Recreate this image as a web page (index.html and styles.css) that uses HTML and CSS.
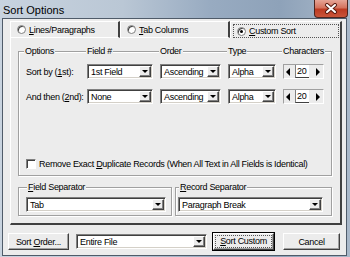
FILE: index.html
```html
<!DOCTYPE html>
<html lang="en">
<head>
    <meta charset="UTF-8">
    <title>Sort Options</title>
    <link rel="stylesheet" href="styles.css">
</head>
<body>
    <div class="window">
        <div class="titlebar">
            <span class="title">Sort Options</span>
            <div class="close">
                <svg width="14" height="11" viewBox="0 0 14 11">
                    <path d="M3 2 L11 9 M11 2 L3 9" stroke="#5a1d12" stroke-width="4" stroke-linecap="round"/>
                    <path d="M3 2 L11 9 M11 2 L3 9" stroke="#fff" stroke-width="2" stroke-linecap="round"/>
                </svg>
            </div>
        </div>

        <div class="client">
            <!-- mode tabs -->
            <div class="tabs">
                <div class="tab"><span class="radio"></span><span><u>L</u>ines/Paragraphs</span></div>
                <div class="tab"><span class="radio"></span><span><u>T</u>ab Columns</span></div>
                <div class="tab active"><div class="focus"><span class="radio on"></span><span><u>C</u>ustom Sort</span></div></div>
            </div>

            <div class="panel">
                <div class="group options">
                    <div class="grid">
                        <span class="head">Options</span>
                        <span class="head">Field #</span>
                        <span class="head">Order</span>
                        <span class="head">Type</span>
                        <span class="head">Characters</span>

                        <span class="lbl">Sort by (<u>1</u>st):</span>
                        <div class="combo w-field"><span>1st Field</span><i class="drop"></i></div>
                        <div class="combo w-order"><span>Ascending</span><i class="drop"></i></div>
                        <div class="combo w-type"><span>Alpha</span><i class="drop"></i></div>
                        <div class="spin"><i class="arr left"></i><span class="num">20</span><i class="arr right"></i></div>

                        <span class="lbl">And then (<u>2</u>nd):</span>
                        <div class="combo w-field"><span>None</span><i class="drop"></i></div>
                        <div class="combo w-order"><span>Ascending</span><i class="drop"></i></div>
                        <div class="combo w-type"><span>Alpha</span><i class="drop"></i></div>
                        <div class="spin"><i class="arr left"></i><span class="num">20</span><i class="arr right"></i></div>
                    </div>
                    <div class="check"><span class="box"></span><span>Remove Exact <u>D</u>uplicate Records (When All Text in All Fields is Identical)</span></div>
                </div>

                <div class="seps">
                    <div class="group sep field-sep">
                        <span class="head"><u>F</u>ield Separator</span>
                        <div class="combo w-fsep"><span>Tab</span><i class="drop"></i></div>
                    </div>
                    <div class="group sep rec-sep">
                        <span class="head"><u>R</u>ecord Separator</span>
                        <div class="combo w-rsep"><span>Paragraph Break</span><i class="drop"></i></div>
                    </div>
                </div>
            </div>

            <div class="footer">
                <div class="btn w-order-btn"><span>Sort <u>O</u>rder...</span></div>
                <div class="combo w-scope"><span>Entire File</span><i class="drop"></i></div>
                <div class="btn default w-sort"><span class="dots"><u>S</u>ort Custom</span></div>
                <div class="btn w-cancel"><span>Cancel</span></div>
            </div>
        </div>
    </div>
</body>
</html>
```

FILE: styles.css
```css
* { box-sizing: border-box; }
body { margin: 0; width: 350px; height: 257px; overflow: hidden; background: #7b8ea6; font-family: "Liberation Sans", Arial, sans-serif; font-size: 9px; letter-spacing: -0.3px; color: #000; }
u { text-decoration: underline; text-underline-offset: 1px; }

.window { height: 257px; display: flex; flex-direction: column; padding: 0 3px 4px 2px; background: linear-gradient(to right, #c8d3df 0%, #bac7d5 35%, #98abc1 60%, #8ea2b9 80%, #a9b8c9 100%); }
.titlebar { height: 20px; display: flex; justify-content: space-between; align-items: flex-start; }
.title { font-size: 11px; letter-spacing: 0; padding: 4px 0 0 1px; color: #000; }
.close { width: 34px; height: 18px; margin-right: -1px; display: flex; align-items: center; justify-content: center; border: 1px solid #4d2520; border-top: none; border-radius: 0 0 4px 4px; background: linear-gradient(#e6a596 0%, #d5735e 45%, #bd3b22 55%, #c9553a 100%); }

.client { flex: 1; display: flex; flex-direction: column; background: #ececec; border: 1px solid #4f5b69; padding: 2px 4px 0 7px; }

/* tabs */
.tabs { display: flex; height: 17px; }
.tab { width: 110px; display: flex; align-items: center; gap: 3px; padding-left: 6px; border-top: 1px solid #fff; border-left: 1px solid #fff; border-right: 2px solid #404040; border-bottom: 1px solid #fff; }
.tab.active { width: 112px; border-bottom: none; padding: 2px 1px 0 2px; }
.focus { flex: 1; height: 100%; display: flex; align-items: center; gap: 3px; padding-left: 3px; border: 1px dotted #555; }
.radio { width: 9px; height: 9px; border-radius: 50%; background: #fff; border: 1px solid #808080; box-shadow: inset 1px 1px #404040; position: relative; }
.radio.on::after { content: ""; position: absolute; left: 2px; top: 2px; width: 3px; height: 3px; border-radius: 50%; background: #000; }

/* tab page */
.panel { height: 187px; border-left: 1px solid #fff; border-right: 2px solid #404040; border-bottom: 2px solid #404040; padding: 13px 8px 0 7px; }
.group { border: 1px solid #a0a0a0; box-shadow: inset 1px 1px #fff, 1px 1px #fff; }
.head { background: #ececec; padding: 0 1px; margin-left: -1px; line-height: 12px; }

.options { height: 125px; display: flex; flex-direction: column; padding: 0 0 6px 6px; }
.grid { display: grid; grid-template-columns: 62px 73px 68px 55px 41px; row-gap: 10px; align-items: center; margin-top: -7px; }
.grid .head { justify-self: start; margin-bottom: -3px; }
.lbl { padding-left: 1px; white-space: nowrap; }

.combo { height: 15px; display: flex; align-items: center; justify-content: space-between; background: #fff; border: 1px solid; border-color: #808080 #fff #fff #808080; box-shadow: inset 1px 1px #404040, inset -1px -1px #d4d0c8; padding: 0 1px 0 3px; white-space: nowrap; }
.drop { width: 12px; height: 11px; display: flex; align-items: center; justify-content: center; background: #ececec; border: 1px solid; border-color: #fff #404040 #404040 #fff; box-shadow: inset -1px -1px #808080; }
.drop::after { content: ""; border-left: 3px solid transparent; border-right: 3px solid transparent; border-top: 3px solid #000; }
.w-field { width: 66px; }
.w-order { width: 61px; }
.w-type { width: 48px; }

.spin { width: 41px; height: 15px; display: flex; align-items: center; border: 1px solid; border-color: #a0a0a0 #fff #fff #a0a0a0; padding: 0 2px 0 1px; }
.num { width: 14px; height: 13px; line-height: 12px; margin-left: 4px; background: #fff; padding-left: 1px; border-bottom: 1px solid #404040; border-left: 1px solid #808080; }
.arr { width: 6px; height: 8px; display: flex; align-items: center; justify-content: center; }
.arr.right { margin-left: auto; }
.arr.left::after { content: ""; border-top: 4px solid transparent; border-bottom: 4px solid transparent; border-right: 4px solid #000; }
.arr.right::after { content: ""; border-top: 4px solid transparent; border-bottom: 4px solid transparent; border-left: 4px solid #000; }

.check { margin-top: auto; display: flex; align-items: center; gap: 3px; padding-left: 1px; white-space: nowrap; }
.box { width: 10px; height: 10px; background: #fff; border: 1px solid; border-color: #808080 #fff #fff #808080; box-shadow: inset 1px 1px #404040; }

.seps { display: flex; gap: 3px; margin-top: 11px; }
.sep { height: 29px; display: flex; flex-direction: column; align-items: flex-start; }
.sep .head { margin-top: -7px; margin-left: 1px; }
.field-sep { width: 154px; padding-left: 7px; }
.rec-sep { width: 157px; padding-left: 2px; }
.sep .combo { margin-top: 4px; }
.w-fsep { width: 140px; }
.w-rsep { width: 145px; }

/* bottom buttons */
.footer { display: flex; align-items: center; height: 30px; margin-left: -2px; padding-top: 3px; }
.btn { height: 17px; display: flex; align-items: center; justify-content: center; background: #ececec; border: 1px solid; border-color: #fff #404040 #404040 #fff; box-shadow: inset -1px -1px #a0a0a0; white-space: nowrap; }
.btn.default { outline: 1px solid #000; }
.dots { border: 1px dotted #555; padding: 0 4px; line-height: 11px; }
.w-order-btn { width: 61px; }
.w-scope { width: 131px; margin-left: 7px; }
.w-sort { width: 61px; margin-left: 6px; }
.w-cancel { width: 57px; margin-left: 9px; }
```
